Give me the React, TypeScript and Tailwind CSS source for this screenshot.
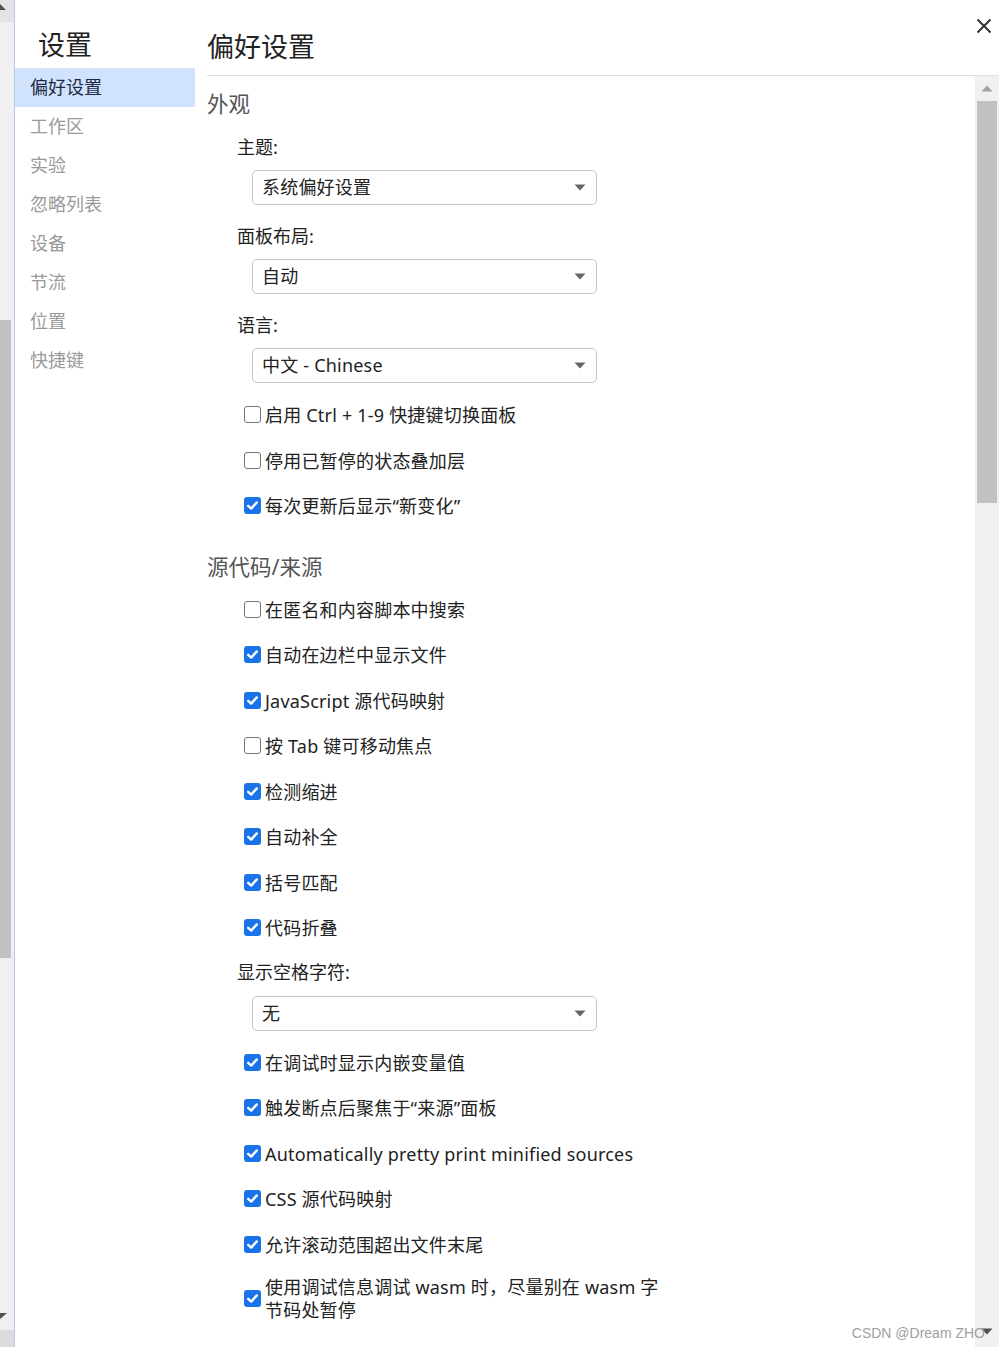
import { useState } from "react";

const Check = ({ checked }: { checked: boolean }) =>
	checked ? (
		<span className="w-[17px] h-[17px] rounded-[3px] bg-[#1a73e8] flex items-center justify-center shrink-0">
			<svg width="13" height="13" viewBox="0 0 13 13">
				<path d="M2.2 6.8 L5.2 9.6 L10.8 3.4" fill="none" stroke="#fff" strokeWidth="2.4" strokeLinecap="round" strokeLinejoin="round" />
			</svg>
		</span>
	) : (
		<span className="w-[17px] h-[17px] rounded-[3px] border-[1.5px] border-[#767676] bg-white shrink-0" />
	);

const Option = ({ label, checked }: { label: React.ReactNode; checked: boolean }) => (
	<div className="flex items-center min-h-[45.5px] pl-[37px] gap-[4px]">
		<Check checked={checked} />
		<span className="relative top-[1px] text-[18px] leading-[23px] tracking-[0.2px] text-[#222]">{label}</span>
	</div>
);

const Label = ({ children, mt }: { children: string; mt: string }) => (
	<div className={`h-[32px] leading-[32px] pl-[30px] text-[18px] text-[#222] ${mt}`}>{children}</div>
);

const Select = ({ value }: { value: string }) => (
	<div className="ml-[45px] w-[345px] h-[35px] border border-[#c6c6c6] rounded-[5px] flex items-center justify-between pl-[9px] pr-[10px] text-[18px] tracking-[0.2px] text-[#222]">
		<span>{value}</span>
		<svg width="12" height="7" viewBox="0 0 12 7">
			<path d="M0.5 0.5 L11.5 0.5 L6 6.5 Z" fill="#666" />
		</svg>
	</div>
);

const SectionTitle = ({ children, className }: { children: string; className: string }) => (
	<div className={`h-[32px] leading-[31px] text-[21.5px] text-[#555] ${className}`}>{children}</div>
);

const App = () => {
	const [active] = useState("偏好设置");
	const navItems = ["偏好设置", "工作区", "实验", "忽略列表", "设备", "节流", "位置", "快捷键"];

	return (
		<div className="relative w-[999px] h-[1347px] overflow-hidden bg-white flex font-[family-name:'Noto_Sans','Noto_Sans_CJK_SC',sans-serif]">
			{/* outer page scrollbar */}
			<div className="w-[14px] h-full bg-[#f0f0f0] flex flex-col">
				<div className="h-[22px] bg-[#e4e4e4] relative">
					<svg className="absolute left-0 top-[3px]" width="8" height="8" viewBox="0 0 8 8">
						<path d="M0 1 L6 7 L0 7 Z" fill="#505050" />
					</svg>
				</div>
				<div className="h-[298px]" />
				<div className="h-[638px] w-[11px] bg-[#c1c1c1]" />
				<div className="flex-1 relative">
					<svg className="absolute left-0 bottom-[10px]" width="8" height="8" viewBox="0 0 8 8">
						<path d="M0 1 L7 1 L0 7 Z" fill="#505050" />
					</svg>
				</div>
				<div className="h-[17px] bg-[#dcdcdc]" />
			</div>
			<div className="w-px h-full bg-[#b5c8e8]" />

			{/* sidebar */}
			<div className="w-[180px] shrink-0">
				<div className="h-[68px] pt-[27px] pl-[23px] text-[27px] leading-[36px] text-[#222]">设置</div>
				{navItems.map((item) => (
					<div
						key={item}
						className={`h-[39px] leading-[38px] pl-[15px] text-[18px] ${
							item === active ? "bg-[#d1e2fc] text-[#1c2a45]" : "text-[#9a9a9a]"
						}`}
					>
						{item}
					</div>
				))}
			</div>

			{/* main */}
			<div className="flex-1 ml-[12px] flex flex-col">
				<div className="h-[76px] border-b border-[#d9e1ee] pt-[29px]">
					<div className="text-[27px] leading-[36px] text-[#222]">偏好设置</div>
				</div>
				<div className="flex-1 flex">
					<div className="flex-1">
						<SectionTitle className="mt-[12px]">外观</SectionTitle>
						<Label mt="mt-[11px]">主题:</Label>
						<div className="mt-[7px]">
							<Select value="系统偏好设置" />
						</div>
						<Label mt="mt-[15px]">面板布局:</Label>
						<div className="mt-[7px]">
							<Select value="自动" />
						</div>
						<Label mt="mt-[15px]">语言:</Label>
						<div className="mt-[7px]">
							<Select value="中文 - Chinese" />
						</div>
						<div className="mt-[9px]">
							<Option label="启用 Ctrl + 1-9 快捷键切换面板" checked={false} />
							<Option label="停用已暂停的状态叠加层" checked={false} />
							<Option label="每次更新后显示“新变化”" checked={true} />
						</div>

						<SectionTitle className="mt-[22px]">源代码/来源</SectionTitle>
						<div className="mt-[4px]">
							<Option label="在匿名和内容脚本中搜索" checked={false} />
							<Option label="自动在边栏中显示文件" checked={true} />
							<Option label="JavaScript 源代码映射" checked={true} />
							<Option label="按 Tab 键可移动焦点" checked={false} />
							<Option label="检测缩进" checked={true} />
							<Option label="自动补全" checked={true} />
							<Option label="括号匹配" checked={true} />
							<Option label="代码折叠" checked={true} />
						</div>
						<Label mt="mt-[5px]">显示空格字符:</Label>
						<div className="mt-[8px]">
							<Select value="无" />
						</div>
						<div className="mt-[9px]">
							<Option label="在调试时显示内嵌变量值" checked={true} />
							<Option label="触发断点后聚焦于“来源”面板" checked={true} />
							<Option label="Automatically pretty print minified sources" checked={true} />
							<Option label="CSS 源代码映射" checked={true} />
							<Option label="允许滚动范围超出文件末尾" checked={true} />
							<div className="py-[8px]">
								<Option
									label={
										<>
											使用调试信息调试 wasm 时，尽量别在 wasm 字
											<br />
											节码处暂停
										</>
									}
									checked={true}
								/>
							</div>
						</div>
					</div>

					{/* inner scrollbar */}
					<div className="w-[24px] bg-[#f1f1f1] flex flex-col items-center">
						<svg className="mt-[9px]" width="12" height="7" viewBox="0 0 12 7">
							<path d="M0.5 6.5 L11.5 6.5 L6 0.5 Z" fill="#a3a3a3" />
						</svg>
						<div className="mt-[9px] w-[20px] h-[402px] bg-[#c1c1c1]" />
						<div className="flex-1" />
						<svg className="mb-[12px]" width="12" height="7" viewBox="0 0 12 7">
							<path d="M0.5 0.5 L11.5 0.5 L6 6.5 Z" fill="#505050" />
						</svg>
					</div>
				</div>
			</div>

			{/* close button */}
			<button className="absolute right-[6px] top-[17px] w-[18px] h-[18px] flex items-center justify-center">
				<svg width="16" height="16" viewBox="0 0 16 16">
					<path d="M1.5 1.5 L14.5 14.5 M14.5 1.5 L1.5 14.5" stroke="#333" strokeWidth="2" />
				</svg>
			</button>

			<div className="absolute right-[14px] bottom-[6px] text-[14px] leading-[16px] text-[#a0a0a0] font-[family-name:'Liberation_Sans',Arial,sans-serif]">
				CSDN @Dream ZHO
			</div>
		</div>
	);
};

export default App;
